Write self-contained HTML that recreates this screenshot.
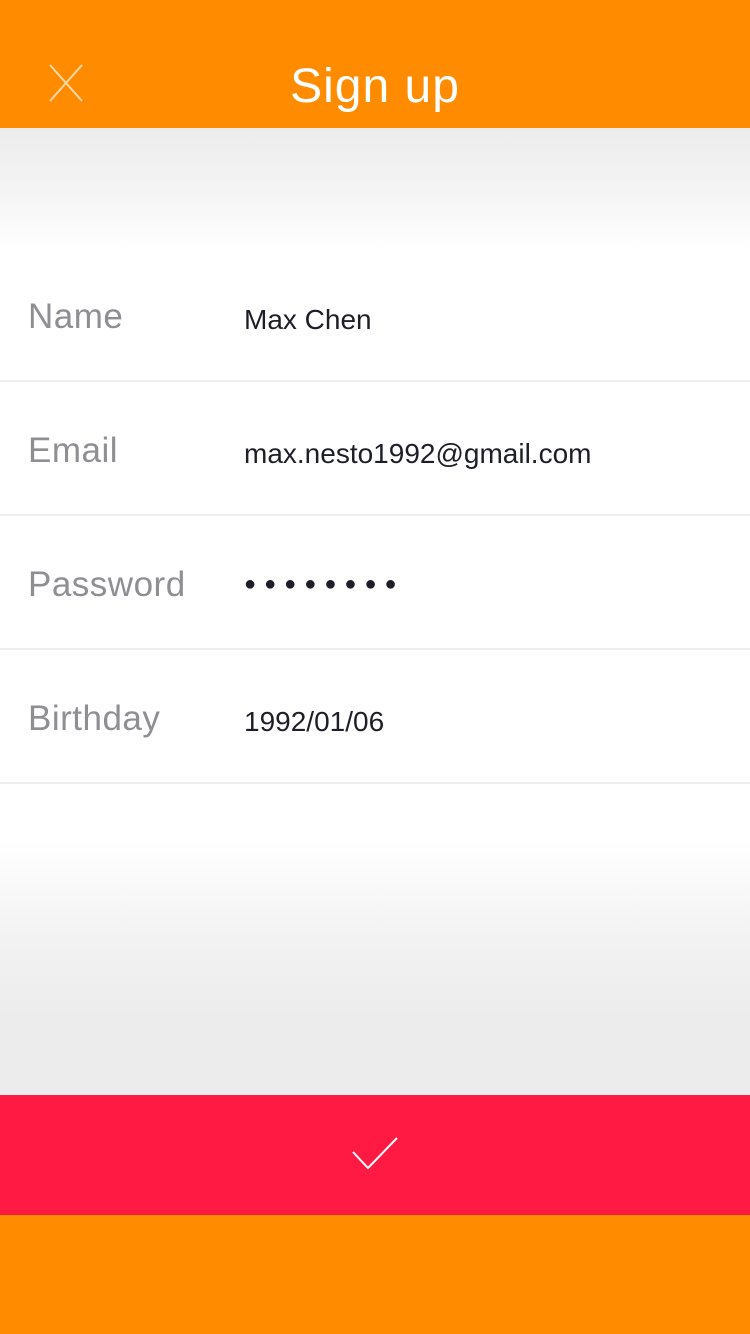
<!DOCTYPE html>
<html><head><meta charset="utf-8"><style>
*{margin:0;padding:0;box-sizing:border-box}
body{width:750px;height:1334px;overflow:hidden;font-family:"Liberation Sans",sans-serif;background:#ff8c00;position:relative}
.hdr{position:absolute;top:0;left:0;width:750px;height:128px;background:#ff8c00}
.hdr h1{position:absolute;left:0;width:750px;top:59px;text-align:center;color:#fff;font-weight:normal;font-size:48px;line-height:56px;letter-spacing:1px}
.top{position:absolute;top:128px;left:0;width:750px;height:122px;background:linear-gradient(#ececec,#f6f6f6 60%,#fff)}
.mid{position:absolute;top:250px;left:0;width:750px;height:590px;background:#fff}
.bot{position:absolute;top:840px;left:0;width:750px;height:255px;background:linear-gradient(#fff,#f2f2f2 40%,#ececec 70%,#ececec)}
.row{position:absolute;left:0;width:750px;height:134px;border-bottom:2px solid #efefef}
.lab{position:absolute;left:28px;top:49px;font-size:35px;color:#8e8e93;letter-spacing:0.5px}
.val{position:absolute;left:244px;top:52px;font-size:28px;color:#1e1e28}
.btn{position:absolute;top:1095px;left:0;width:750px;height:120px;background:#ff1a44}
</style></head><body>
<div class="hdr"><svg width="750" height="128" style="position:absolute;left:0;top:0"><path d="M50 65L82 101M82 65L50 101" stroke="#ffd9a8" stroke-width="2" fill="none"/></svg><h1>Sign up</h1></div>
<div class="top"></div><div class="mid"></div><div class="bot"></div>
<div class="row" style="top:248px"><div class="lab">Name</div><div class="val" style="top:56px">Max Chen</div></div>
<div class="row" style="top:382px"><div class="lab">Email</div><div class="val" style="top:56px">max.nesto1992@gmail.com</div></div>
<div class="row" style="top:516px"><div class="lab">Password</div><div class="val" style="top:57px;font-size:20px;letter-spacing:8px">●●●●●●●●</div></div>
<div class="row" style="top:650px"><div class="lab">Birthday</div><div class="val" style="top:56px">1992/01/06</div></div>
<div class="btn"><svg width="750" height="120"><path d="M353 57L368 73L397 43" stroke="#fff" stroke-width="2" fill="none"/></svg></div>
</body></html>
